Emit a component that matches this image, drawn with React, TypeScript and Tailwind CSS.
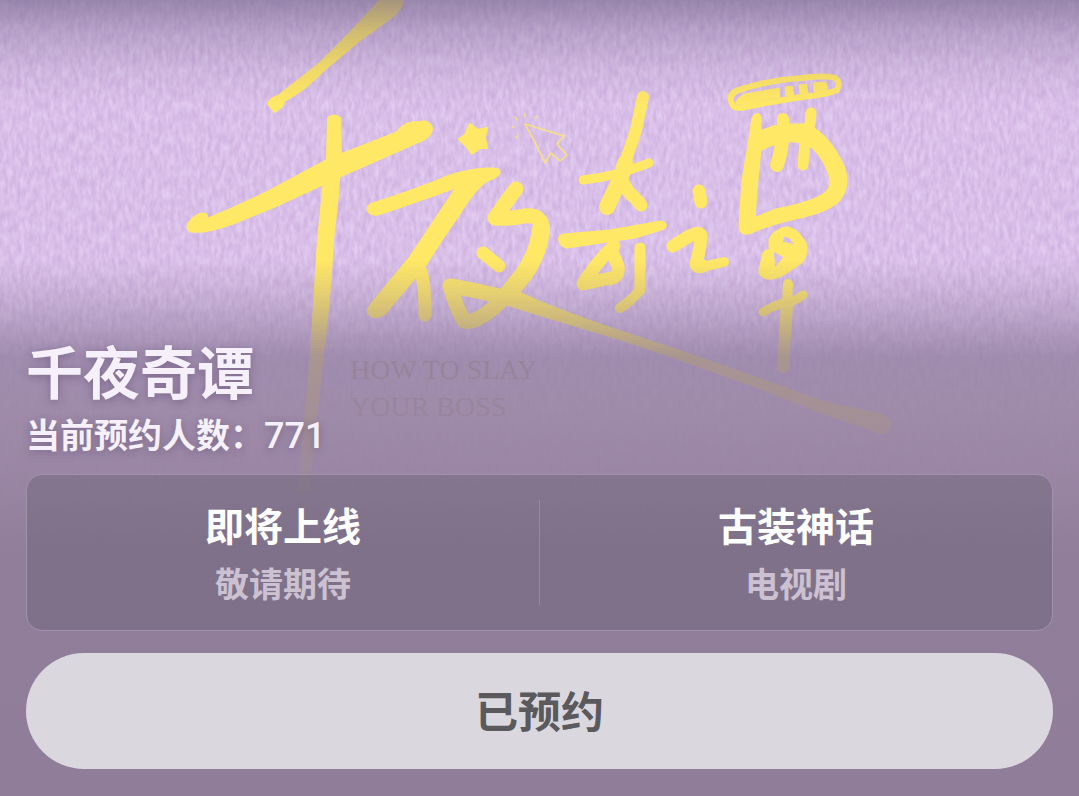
const stats = [
  { title: "即将上线", note: "敬请期待" },
  { title: "古装神话", note: "电视剧" },
];

function Poster() {
  return (
    <svg
      className="absolute inset-0 size-full"
      viewBox="0 0 1079 796"
      preserveAspectRatio="xMidYMin slice"
      role="img"
      aria-label="千夜奇谭"
    >
      <defs>
        <filter id="paper" x="0" y="0" width="100%" height="100%" colorInterpolationFilters="sRGB">
          <feTurbulence type="fractalNoise" baseFrequency="0.24 0.09" numOctaves="2" seed="8" />
          <feColorMatrix
            type="matrix"
            values="0.12 0 0 0 0.79
                    0.16 0 0 0 0.67
                    0.10 0 0 0 0.86
                    0 0 0 0 1"
          />
        </filter>
        <linearGradient id="topShade" x1="0" y1="0" x2="0" y2="1">
          <stop offset="0" stopColor="#74658a" stopOpacity="0.64" />
          <stop offset="0.3" stopColor="#74658a" stopOpacity="0.34" />
          <stop offset="0.65" stopColor="#74658a" stopOpacity="0.12" />
          <stop offset="1" stopColor="#74658a" stopOpacity="0" />
        </linearGradient>
        <linearGradient id="bottomShade" gradientUnits="userSpaceOnUse" x1="0" y1="260" x2="0" y2="796">
          <stop offset="0" stopColor="#8d7b9b" stopOpacity="0" />
          <stop offset="0.06" stopColor="#8d7b9b" stopOpacity="0.22" />
          <stop offset="0.12" stopColor="#8d7b9b" stopOpacity="0.48" />
          <stop offset="0.18" stopColor="#907e9e" stopOpacity="0.78" />
          <stop offset="0.28" stopColor="#95829f" stopOpacity="0.86" />
          <stop offset="0.4" stopColor="#95829f" stopOpacity="0.93" />
          <stop offset="0.54" stopColor="#907e9b" stopOpacity="1" />
          <stop offset="1" stopColor="#8f7d99" stopOpacity="1" />
        </linearGradient>
      </defs>

      <rect width="1079" height="796" filter="url(#paper)" />

      <g
        fontFamily="'Liberation Serif', serif"
        fontSize="28"
        fontWeight="400"
        fill="#8d7c4c"
        fillOpacity="0.6"
      >
        <text x="350" y="379">HOW TO SLAY</text>
        <text x="350" y="416">YOUR BOSS</text>
      </g>

      <g fill="#ffe865" stroke="#ffe865" strokeLinejoin="round">
        <path strokeWidth="2" d="M268 104Q270 98 278 96Q300 79 320 63Q352 32 380 0H403Q402 9 392 17L360 40L323 71Q304 91 284 101Q284 106 280 108L275 112Z" />
        <path strokeWidth="3" d="M204 214Q208 215 206 220Q240 206 270 191L328 160L397 133Q404 124 412 123L425 122Q433 125 431 131Q429 138 417 142Q395 152 340 176L323 184L275 206L233 223Q205 233 191 231Q185 228 191 221Q198 213 204 214Z" />
        <path strokeWidth="2" d="M328 118Q334 113 340 118L341 157Q338 200 333 240Q330 300 323 353L315 427L308 493H299L305 420L311 353L318 240Q324 180 327 157Z" />
        <path strokeWidth="2" d="M470 124L478 130L487 128L485 138L487 148L480 148L472 154L467 147L459 139L465 135Z" />
        <path strokeWidth="3" d="M368 209Q369 204 376 203Q420 189 450 176Q475 168 493 169Q500 169 499 173Q496 178 487 180Q474 189 459 214Q440 241 426 264L384 314Q374 320 369 313Q368 309 372 304L410 258L458 186Q420 200 378 214Q369 215 368 209Z" />
        <path strokeWidth="2" d="M502 293L520 293L540 302Q575 316 607 327L700 358L757 378L823 402L873 413Q888 414 891 425Q888 432 880 434L867 428L823 413L757 387L690 363L623 340L540 315L505 304Z" />
        <path strokeWidth="3" d="M560 241Q558 236 564 235L610 231L661 222Q668 224 664 228L635 237L567 247Q561 246 560 241Z" />
        <path strokeWidth="3" fillRule="evenodd" d="M753 118Q758 111 760 118L760 132Q774 126 783 125L808 125Q829 137 841 162Q852 183 839 200Q828 211 800 217Q772 223 751 232Q740 236 740 226L743 180L749 145ZM760 150L756 190L754 219L776 210Q812 203 825 194Q835 186 828 170Q820 151 808 144Q786 135 760 150Z" />
        <path strokeWidth="1" d="M736 103Q737 97 745 94L779 88L780 97L742 104Q737 105 736 103Z" />
        <path strokeWidth="1" d="M785 87L792 86L794 95L786 96ZM799 85L806 84L808 93L800 94ZM813 83L825 82Q829 86 826 91L814 92Z" />
        <path strokeWidth="1" fillRule="evenodd" d="M788 227Q797 229 802 237Q808 243 807 250Q806 261 799 265L787 273Q777 280 767 279Q758 277 759 270L763 253Q765 249 769 250V240Q771 233 778 230Q783 226 788 227ZM784 236L782 242L795 245L790 238ZM773 251L775 268L784 257Z" />
      </g>

      <g fill="none" stroke="#ffe865" strokeLinecap="round" strokeLinejoin="round">
        <path strokeWidth="13" d="M421 272Q425 285 425 315" />
        <path strokeWidth="15" d="M516 189Q506 202 495 218Q512 219 524 216Q544 214 542 232Q539 258 520 280Q505 298 491 310Q473 324 464 321Q457 310 450 286Q470 289 507 298" />
        <path strokeWidth="18" d="M541 229Q539 252 524 274L508 294" />
        <path strokeWidth="13" d="M483 253L499 266" />
        <path strokeWidth="12" d="M643 97L636 130L626 160" />
        <path strokeWidth="16" d="M625 163Q621 180 614 192L607 207" />
        <path strokeWidth="9" d="M583 180Q614 177 649 163" />
        <path strokeWidth="13" d="M624 184Q628 193 635 198L641 205" />
        <path strokeWidth="13" d="M614 246Q598 260 583 284L606 279Q620 279 618 266L612 252" />
        <path strokeWidth="11" d="M640 248L640 290" />
        <path strokeWidth="10" d="M640 290Q631 301 620 308" />
        <path strokeWidth="13" d="M699 191L701 202" />
        <path strokeWidth="13" d="M673 246L686 238Q700 230 701 236Q700 250 697 260Q694 269 703 266" />
        <path strokeWidth="10" d="M698 268L724 262" />
        <path strokeWidth="12" d="M783 119L783 135" />
        <path strokeWidth="14" d="M782 130Q783 148 777 165" />
        <path strokeWidth="11" d="M811 113Q810 131 805 141L803 165" />
        <path strokeWidth="10" d="M788 284L786 318" />
        <path strokeWidth="12" d="M787 305L783 367" />
        <path strokeWidth="9" d="M763 312Q775 305 785 303Q794 302 803 295" />
        <path strokeWidth="6" d="M731 101Q729 92 742 89Q770 80 802 78Q826 75 835 78Q841 82 837 90Q829 94 802 97Q769 102 740 108Q732 108 731 101Z" />
        <path strokeWidth="1.6" strokeOpacity="0.8" d="M525 124L564 136L557 144L567 155L560 161L551 153L545 163Q536 143 525 124Z" />
        <path strokeWidth="1.6" strokeOpacity="0.7" d="M525 114V117M537 116L535 118M515 117L517 120M512 127H514M518 135L516 138" />
      </g>

      <rect width="1079" height="105" fill="url(#topShade)" />
      <rect y="260" width="1079" height="536" fill="url(#bottomShade)" />
    </svg>
  );
}

export default function App() {
  return (
    <main
      lang="zh-CN"
      className="relative flex min-h-screen flex-col justify-end overflow-hidden bg-[#8f7d99] px-[26px] pb-[27px] font-['Noto_Sans_CJK_SC',sans-serif]"
    >
      <Poster />

      <header className="relative text-[#f5f0f9] [text-shadow:0_2px_8px_rgba(60,40,80,0.35)]">
        <h1 className="mb-1 text-[57px] leading-[70px] font-bold">千夜奇谭</h1>
        <p className="text-[34px] leading-[52px] font-bold">
          当前预约人数：<span className="font-[Roboto,sans-serif] text-[36px] font-medium">771</span>
        </p>
      </header>

      <section className="relative mt-3 flex rounded-2xl border border-[#a391ad] bg-[#5f5867]/35 py-[25px] text-center">
        {stats.map((item) => (
          <div key={item.title} className="flex-1 border-[#9888a2] not-first:border-l">
            <h2 className="text-[39px] leading-[48px] font-bold text-white">{item.title}</h2>
            <p className="mt-3 text-[34px] leading-[45px] font-bold text-[#cbc1d1]">{item.note}</p>
          </div>
        ))}
      </section>

      <button
        type="button"
        className="relative mt-[22px] flex h-[116px] w-full items-center justify-center rounded-full bg-[#dbd7df] pb-1 text-[43px] font-bold text-[#5a595c]"
      >
        已预约
      </button>
    </main>
  );
}
